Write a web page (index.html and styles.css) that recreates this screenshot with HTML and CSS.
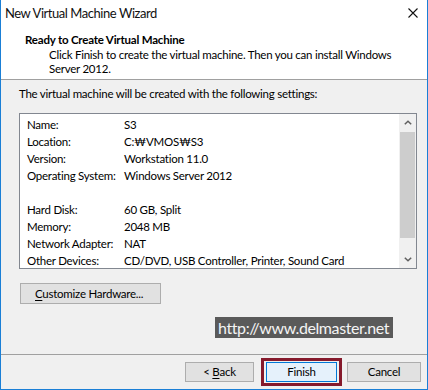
FILE: index.html
```html
<!DOCTYPE html>
<html>
<head>
<meta charset="utf-8">
<link rel="stylesheet" href="styles.css">
</head>
<body>
<div class="window">
  <div class="header">
    <div class="titlebar">
      <span class="title">New Virtual Machine Wizard</span>
      <span class="close"><svg width="10" height="10" viewBox="0 0 10 10"><path d="M0.5 0.5 L9.5 9.5 M9.5 0.5 L0.5 9.5" stroke="#111" stroke-width="1.1" fill="none"/></svg></span>
    </div>
    <div class="heading">Ready to Create Virtual Machine</div>
    <div class="desc">Click Finish to create the virtual machine. Then you can install Windows<br>Server 2012.</div>
  </div>
  <div class="body">
    <div class="intro">The virtual machine will be created with the following settings:</div>
    <div class="listbox">
      <div class="rows">
        <div class="row"><span class="label">Name:</span><span class="value">S3</span></div>
        <div class="row"><span class="label">Location:</span><span class="value">C:₩VMOS₩S3</span></div>
        <div class="row"><span class="label">Version:</span><span class="value">Workstation 11.0</span></div>
        <div class="row"><span class="label">Operating System:</span><span class="value">Windows Server 2012</span></div>
        <div class="row"></div>
        <div class="row"><span class="label">Hard Disk:</span><span class="value">60 GB, Split</span></div>
        <div class="row"><span class="label">Memory:</span><span class="value">2048 MB</span></div>
        <div class="row"><span class="label">Network Adapter:</span><span class="value">NAT</span></div>
        <div class="row"><span class="label">Other Devices:</span><span class="value">CD/DVD, USB Controller, Printer, Sound Card</span></div>
      </div>
      <div class="scrollbar">
        <div class="arrow"><svg width="8" height="5" viewBox="0 0 8 5"><path d="M0.8 4.3 L4 1.2 L7.2 4.3" stroke="#606060" stroke-width="1.5" fill="none"/></svg></div>
        <div class="track"><div class="thumb"></div></div>
        <div class="arrow"><svg width="8" height="5" viewBox="0 0 8 5"><path d="M0.8 0.7 L4 3.8 L7.2 0.7" stroke="#606060" stroke-width="1.5" fill="none"/></svg></div>
      </div>
    </div>
    <button class="btn customize"><u>C</u>ustomize Hardware...</button>
    <div class="watermark">http://www.delmaster.net</div>
  </div>
  <div class="footer">
    <button class="btn back">&lt; <u>B</u>ack</button>
    <div class="focus-frame"><button class="btn primary">Finish</button></div>
    <button class="btn cancel">Cancel</button>
  </div>
</div>
</body>
</html>
```
FILE: styles.css
```css
* { box-sizing: border-box; }
html, body { margin: 0; padding: 0; }
body {
  font-family: Lato, "Liberation Sans", sans-serif;
  font-size: 11.5px;
  letter-spacing: -0.25px;
  color: #000;
  background: #f0f0f0;
}
.window {
  position: relative;
  width: 428px;
  height: 390px;
  border: 1px solid #1a7fd6;
  border-top: none;
  background: #f0f0f0;
  display: flex;
  flex-direction: column;
}
.header {
  height: 80px;
  background: #fff;
  border-bottom: 1px solid #a0a0a0;
}
.titlebar {
  height: 26px;
  display: flex;
  align-items: center;
  justify-content: space-between;
  padding-left: 4px;
  padding-right: 9px;
}
.title { font-size: 13px; letter-spacing: -0.45px; color: #111; }
.close { width: 10px; height: 10px; display: flex; }
.heading {
  margin-top: 6px;
  padding-left: 24px;
  line-height: 16px;
  font-size: 11.5px;
  letter-spacing: -0.2px;
  font-weight: bold;
}
.desc {
  padding-left: 48px;
  line-height: 14px;
}
.body {
  flex: 1;
  padding: 0 10px 0 18px;
  display: flex;
  flex-direction: column;
  align-items: flex-start;
}
.intro {
  margin-top: 6px;
  line-height: 16px;
}
.listbox {
  margin-top: 11px;
  width: 398px;
  height: 156px;
  border: 1px solid #828790;
  background: #fff;
  display: flex;
}
.rows {
  flex: 1;
  padding: 2px 0 0 7px;
}
.row {
  display: flex;
  height: 17px;
  line-height: 17px;
  white-space: nowrap;
}
.label { width: 97px; flex: none; }
.scrollbar {
  width: 17px;
  background: #f0f0f0;
  display: flex;
  flex-direction: column;
}
.arrow {
  height: 17px;
  display: flex;
  align-items: center;
  justify-content: center;
}
.track {
  flex: 1;
  padding: 1px 1px 13px 1px;
  display: flex;
}
.thumb {
  flex: 1;
  background: #cdcdcd;
}
.btn {
  font: inherit;
  letter-spacing: inherit;
  color: #000;
  background: #e1e1e1;
  border: 1px solid #adadad;
  height: 20px;
  padding: 0;
  margin: 0;
  line-height: 18px;
}
.btn u { text-decoration: underline; text-underline-offset: 2px; }
.customize {
  margin-top: 14px;
  margin-left: 1px;
  width: 141px;
  height: 21px;
  text-align: left;
  padding-left: 14px;
}
.watermark {
  position: absolute;
  left: 214px;
  top: 317px;
  width: 178px;
  height: 21px;
  line-height: 21px;
  background: #5a5a5a;
  color: #f4f4f4;
  font-size: 16px;
  letter-spacing: -0.4px;
  padding-left: 3px;
  white-space: nowrap;
}
.footer {
  height: 35px;
  border-top: 1px solid #a0a0a0;
  display: flex;
  align-items: center;
  justify-content: flex-end;
  padding-right: 6px;
}
.back { width: 69px; }
.focus-frame {
  margin-left: 7px;
  margin-right: 5px;
  border: 3px solid #861a2c;
  padding: 1px 2px;
  display: flex;
}
.primary {
  width: 71px;
  background: #e5f1fb;
  border-color: #0078d7;
}
.cancel { width: 74px; }
```
